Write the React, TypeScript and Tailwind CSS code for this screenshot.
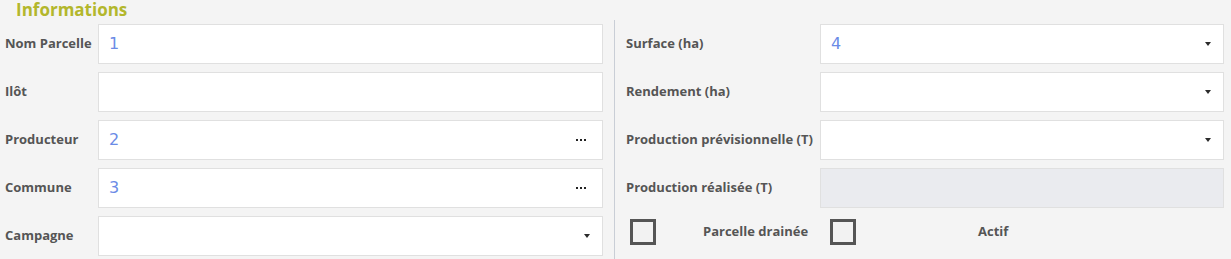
import React from "react";

type Field = {
  label: string;
  value?: string;
  kind?: "text" | "lookup" | "select" | "disabled";
};

const leftFields: Field[] = [
  { label: "Nom Parcelle", value: "1" },
  { label: "Ilôt" },
  { label: "Producteur", value: "2", kind: "lookup" },
  { label: "Commune", value: "3", kind: "lookup" },
  { label: "Campagne", kind: "select" },
];

const rightFields: Field[] = [
  { label: "Surface (ha)", value: "4", kind: "select" },
  { label: "Rendement (ha)", kind: "select" },
  { label: "Production prévisionnelle (T)", kind: "select" },
  { label: "Production réalisée (T)", kind: "disabled" },
];

const Caret = () => (
  <svg width="6" height="4" viewBox="0 0 6 4" className="shrink-0">
    <polygon points="0,0 6,0 3,4" fill="#2b2b2b" />
  </svg>
);

const Dots = () => (
  <div className="flex gap-[2px] shrink-0">
    <span className="w-[2px] h-[2px] bg-[#222]" />
    <span className="w-[2px] h-[2px] bg-[#222]" />
    <span className="w-[2px] h-[2px] bg-[#222]" />
  </div>
);

const Input = ({ field }: { field: Field }) => {
  const disabled = field.kind === "disabled";
  return (
    <div
      className={`flex-1 min-w-0 h-[40px] flex items-center justify-between border border-[#e0e0e0] ${
        disabled ? "bg-[#eaebef]" : "bg-white"
      } pl-[10px]`}
    >
      <span className="text-[16px] text-[#6b8be6] font-['DejaVu_Sans',sans-serif]">
        {field.value}
      </span>
      {field.kind === "lookup" && (
        <div className="pr-[16px]">
          <Dots />
        </div>
      )}
      {field.kind === "select" && (
        <div className="pr-[12px]">
          <Caret />
        </div>
      )}
    </div>
  );
};

const Label = ({ text, width }: { text: string; width: string }) => (
  <div className={`${width} shrink-0 text-[13px] font-bold text-[#555] whitespace-nowrap`}>
    {text}
  </div>
);

const Checkbox = () => (
  <div className="w-[26px] h-[26px] border-[3px] border-[#555] bg-[#f2f2f2] shrink-0" />
);

export default function App() {
  return (
    <div className="w-[1231px] h-[259px] bg-[#f4f4f4] font-['Open_Sans',sans-serif] overflow-hidden">
      <div className="h-[20px] pl-[16px] text-[17px] leading-[19px] font-bold text-[#b3b72c]">
        Informations
      </div>
      <div className="flex">
        <div className="w-[603px] shrink-0 pt-[4px] flex flex-col gap-[8px]">
          {leftFields.map((f) => (
            <div key={f.label} className="flex items-center">
              <Label text={f.label} width="w-[98px] pl-[5px]" />
              <Input field={f} />
            </div>
          ))}
        </div>
        <div className="ml-[11px] w-px bg-[#c9ced6] h-[239px] shrink-0" />
        <div className="flex-1 pl-[11px] pr-[7px] pt-[4px] flex flex-col gap-[8px]">
          {rightFields.map((f) => (
            <div key={f.label} className="flex items-center">
              <Label text={f.label} width="w-[194px]" />
              <Input field={f} />
            </div>
          ))}
          <div className="flex items-center pl-[4px] pt-[3px]">
            <Checkbox />
            <div className="ml-[47px] w-[127px] text-[13px] font-bold text-[#555]">
              Parcelle drainée
            </div>
            <Checkbox />
            <div className="ml-[122px] text-[13px] font-bold text-[#555]">Actif</div>
          </div>
        </div>
      </div>
    </div>
  );
}
